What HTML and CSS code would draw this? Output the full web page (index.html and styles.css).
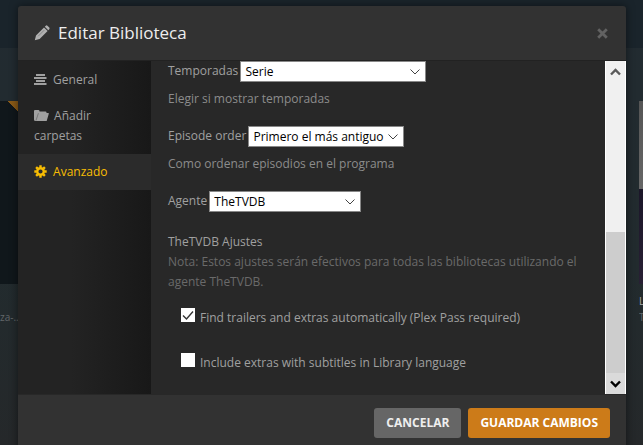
FILE: index.html
```html
<!DOCTYPE html>
<html lang="es">
	<head>
		<meta charset="utf-8" />
		<title>Editar Biblioteca</title>
		<link rel="stylesheet" href="styles.css">
	</head>
	<body>
		<div class="navbar"></div>
		<div class="library">
			<div class="item item-left">
				<div class="poster"><span class="unwatched"></span></div>
				<p class="item-title"></p>
				<p class="item-year">za-...</p>
			</div>
			<div class="item item-right">
				<div class="poster"></div>
				<p class="item-title">L</p>
				<p class="item-year">T</p>
			</div>
		</div>

		<div class="modal" role="dialog" aria-labelledby="modalTitle">
			<div class="modal-header">
				<svg class="icon-pencil" width="16" height="16" viewBox="0 0 16 16">
					<path fill="#b0b0b0" d="M.8 15.200l1.200-4.800 8-8 3.600 3.600-8 8zM10.800 1.700l1-1q.8-.7 1.600 0l1.900 1.900q.7.8 0 1.600l-1 1z" />
					<path stroke="#6a6a6a" stroke-width="0.6" d="M4.200 11.200l6-6" />
				</svg>
				<h3 id="modalTitle">Editar Biblioteca</h3>
				<button type="button" class="close" aria-label="Cerrar">
					<svg width="11" height="11" viewBox="0 0 11 11">
						<path stroke="#626262" stroke-width="2.800" d="M1.200 1.200l8.600 8.600M9.800 1.200l-8.600 8.600" />
					</svg>
				</button>
			</div>

			<div class="modal-body">
				<nav class="sidebar">
					<a href="#general">
						<svg width="14" height="13" viewBox="0 0 14 13">
							<path fill="currentColor" d="M2 1h9v2H2zM0 4h12.500v2H0zM2 7h9v2H2zM0 10h12.500v2H0z" />
						</svg>
						General
					</a>
					<a href="#carpetas">
						<svg width="15" height="13" viewBox="0 0 15 13">
							<path fill="currentColor" d="M0 2q0-1 1-1h3.500q.8 0 1 1v.6h6q1 0 1 1V12H1.400Q0 12 0 10.500z" />
							<path fill="currentColor" d="M4.800 4h9.500q.7 0 .5.700l-1.900 6.600q-.2.700-1 .7H2.300z" />
							<path fill="none" stroke="#4a4a4a" stroke-width="0.5" d="M2 11.500l2.400-7.300" />
						</svg>
						Añadir carpetas
					</a>
					<a href="#avanzado" class="active">
						<svg width="14" height="13" viewBox="0 0 14 13">
							<g stroke="currentColor" fill="none">
								<circle cx="6.500" cy="6.500" r="3.300" stroke-width="2.400" />
								<path stroke-width="2.400" d="M6.500.3v2.200M6.500 10.500v2.200M.3 6.500h2.200M10.500 6.500h2.200M2.100 2.100l1.600 1.600M9.300 9.300l1.600 1.600M10.900 2.100L9.300 3.700M3.700 9.300l-1.600 1.600" />
							</g>
						</svg>
						Avanzado
					</a>
				</nav>

				<form class="pane" id="settings">
					<div class="form-group">
						<label for="temporadas">Temporadas</label>
						<select id="temporadas" class="select-season">
							<option>Serie</option>
						</select>
						<p class="help">Elegir si mostrar temporadas</p>
					</div>
					<div class="form-group">
						<label for="orden">Episode order</label>
						<select id="orden" class="select-order">
							<option>Primero el más antiguo</option>
						</select>
						<p class="help">Como ordenar episodios en el programa</p>
					</div>
					<div class="form-group">
						<label for="agente">Agente</label>
						<select id="agente" class="select-agent">
							<option>TheTVDB</option>
						</select>
					</div>
					<h4>TheTVDB Ajustes</h4>
					<p class="note">
						Nota: Estos ajustes serán efectivos para todas las
						bibliotecas utilizando el agente TheTVDB.
					</p>
					<label class="check">
						<input type="checkbox" checked />
						Find trailers and extras automatically (Plex Pass required)
					</label>
					<label class="check">
						<input type="checkbox" />
						Include extras with subtitles in Library language
					</label>
				</form>

				<div class="scrollbar" aria-hidden="true">
					<div class="scroll-arrow">
						<svg width="11" height="8" viewBox="0 0 11 8">
							<path fill="none" stroke="#5a5a5a" stroke-width="2.400" d="M1 6.500l4.500-4.500 4.500 4.500" />
						</svg>
					</div>
					<div class="scroll-track"></div>
					<div class="scroll-thumb"></div>
					<div class="scroll-arrow scroll-down">
						<svg width="11" height="8" viewBox="0 0 11 8">
							<path fill="none" stroke="#000" stroke-width="2.400" d="M1 1.500L5.500 6 10 1.500" />
						</svg>
					</div>
				</div>
			</div>

			<div class="modal-footer">
				<button type="button" class="btn">Cancelar</button>
				<button type="submit" form="settings" class="btn btn-primary">Guardar cambios</button>
			</div>
		</div>
	</body>
</html>
```

FILE: styles.css
```css
* {
	box-sizing: border-box;
}
body {
	margin: 0;
	height: 100vh;
	overflow: hidden;
	font-family: "Open Sans", "Noto Sans", sans-serif;
	font-size: 12px;
	line-height: 20px;
	color: #a0a0a0;
	background: linear-gradient(#222b31, #222b2e 60%, #25282a);
}
h3,
h4,
p {
	margin: 0;
	font-weight: normal;
}
.navbar {
	height: 48px;
	background-color: #1a242b;
}

/* Library behind the dialog */
.library {
	display: flex;
	justify-content: space-between;
	padding-top: 53px;
}
.item {
	overflow: hidden;
	white-space: nowrap;
	font-size: 10px;
	line-height: 16px;
}
.item-left {
	width: 24px;
}
.item-right {
	width: 4px;
}
.poster {
	height: 183px;
	margin-bottom: 9px;
	background-color: #10171b;
}
.item-right .poster {
	background: linear-gradient(#555, #666 48%, #1b1629 48%, #282034);
}
.unwatched {
	display: block;
	width: 10px;
	height: 11px;
	margin-left: 8px;
	background: linear-gradient(to top right, transparent 50%, #8a5a17 50%);
}
.item-title {
	height: 16px;
	color: #aaa;
}
.item-year {
	color: #62676a;
}

/* Dialog */
.modal {
	position: absolute;
	top: 6px;
	left: 18px;
	right: 17px;
	border-radius: 3px;
	background-color: #323232;
	box-shadow: 0 0 8px rgba(0, 0, 0, 0.5);
}
.modal-header {
	display: flex;
	align-items: center;
	height: 55px;
	padding: 0 18px 0 16px;
	border-bottom: 1px solid #222;
}
.modal-header h3 {
	flex: 1;
	margin-left: 8px;
	font-size: 17px;
	line-height: 24px;
	color: #eee;
}
.close {
	display: flex;
	padding: 0;
	border: none;
	background: none;
	cursor: pointer;
}
.modal-body {
	display: flex;
	overflow: hidden;
	background-color: #282828;
}
.sidebar {
	width: 133px;
	padding-top: 1px;
	background: linear-gradient(to right, #232323 40%, #181818);
}
.sidebar a {
	display: block;
	padding: 8px 16px;
	color: #a0a0a0;
	text-decoration: none;
}
.sidebar a.active {
	color: #f9be03;
	background-color: #2b2b2b;
}
.sidebar svg {
	margin-right: 2px;
	vertical-align: -2px;
}
.pane {
	flex: 1;
	padding: 0 16px 21px 17px;
}
.form-group {
	margin-bottom: 17px;
}
.form-group label {
	margin-right: -1px;
}
select {
	height: 21px;
	padding: 0 18px 0 4px;
	border: 1px solid #888;
	border-radius: 0;
	font: inherit;
	line-height: 19px;
	color: #000;
	vertical-align: top;
	appearance: none;
	background: #fff url("data:image/svg+xml,%3Csvg xmlns='http://www.w3.org/2000/svg' width='10' height='6'%3E%3Cpath d='M.5.5L5 5 9.500.5' fill='none' stroke='%23444'/%3E%3C/svg%3E") no-repeat right 5px center;
}
.select-season {
	width: 186px;
}
.select-order {
	width: 156px;
}
.select-agent {
	width: 152px;
}
.help {
	margin-top: 7px;
	color: #8c8c8c;
}
h4 {
	margin-top: 20px;
	font-size: 12px;
}
.note {
	margin-bottom: 16px;
	color: #6a6a6a;
}
.check {
	display: flex;
	gap: 5px;
	margin: 0 0 25px 13px;
}
.check:last-child {
	margin-bottom: 0;
}
.check input {
	width: 14px;
	height: 14px;
	margin: 0;
	appearance: none;
	background-color: #fff;
}
.check input:checked {
	background-image: url("data:image/svg+xml,%3Csvg xmlns='http://www.w3.org/2000/svg' width='14' height='14'%3E%3Cpath d='M2 7.500L5.500 11 12 3.500' fill='none' stroke='%23333' stroke-width='1.400'/%3E%3C/svg%3E");
}
.scrollbar {
	display: flex;
	flex-direction: column;
	width: 21px;
	border: solid #fff;
	border-width: 0 1px;
	background-color: #f0f0f0;
}
.scroll-arrow {
	display: flex;
	align-items: center;
	justify-content: center;
	height: 21px;
}
.scroll-down {
	background-color: #dadada;
}
.scroll-track {
	flex: 150;
}
.scroll-thumb {
	flex: 141;
	background-color: #cdcdcd;
}
.modal-footer {
	display: flex;
	justify-content: flex-end;
	gap: 7px;
	padding: 13px 16px;
	border-top: 1px solid #282828;
}
.btn {
	height: 30px;
	padding: 0 12px;
	border: none;
	border-radius: 3px;
	font: inherit;
	font-weight: bold;
	text-transform: uppercase;
	color: #eee;
	background-color: #666;
	cursor: pointer;
}
.btn-primary {
	color: #fff;
	background-color: #cc7b19;
}
```
